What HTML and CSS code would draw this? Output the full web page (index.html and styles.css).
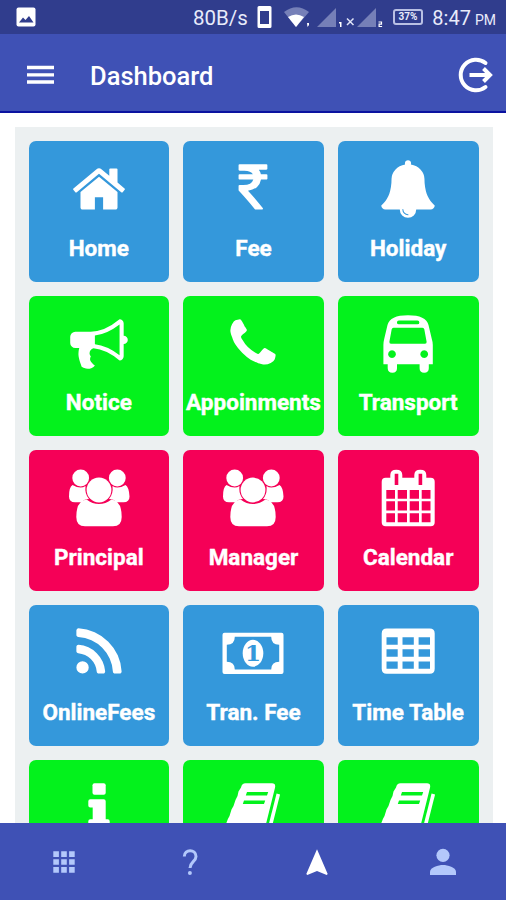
FILE: index.html
```html
<!DOCTYPE html>
<html lang="en">
<head>
  <meta charset="UTF-8" />
  <meta name="viewport" content="width=device-width, initial-scale=1" />
  <title>Dashboard</title>
  <link rel="stylesheet" href="styles.css">
</head>
<body>

  <!-- STATUS BAR -->
  <div class="status-bar">
    <svg class="status-photo" viewBox="0 0 20 20">
      <rect x="0.500" y="0.500" width="19" height="19" rx="2" fill="#fff" />
      <path d="M3 15.500l4-5 2.500 2.500 3.500-4 4.500 6.500z" fill="#303d8d" />
    </svg>
    <span class="speed">80B/s</span>
    <svg class="status-icons" width="136" height="34" viewBox="253 0 136 34">
      <path d="M259 6h11q1.500 0 1.500 1.500v19q0 1.500-1.500 1.500h-11q-1.500 0-1.500-1.500v-19q0-1.500 1.500-1.500zM260 11v13h9v-13z" fill="#fff" fill-rule="evenodd" />
      <path d="M284 12q12.500-9.500 25 0L296 27z" fill="#7680b8" />
      <path d="M288 17q8-5 16 0l-8 10z" fill="#fff" />
      <path d="M307 23h2v2l-1.500 2z" fill="#fff" />
      <path d="M317 27l19-19v19zM357 27l19-19v19z" fill="#7680b8" />
      <path d="M339 22h2.500v5h-1.500v-3.500h-1z" fill="#fff" />
      <path d="M347 18.500l6.500 6.500M353.500 18.500l-6.500 6.500" stroke="#dfe3f7" stroke-width="1.500" />
      <path d="M378.500 22h3v2.200h-2.400v2.300h3" fill="none" stroke="#fff" stroke-width="1.200" />
    </svg>
    <span class="battery">37%</span>
    <span class="clock">8:47<small>PM</small></span>
  </div>

  <!-- HEADER -->
  <header>
    <svg class="menu-icon" viewBox="0 0 27 20">
      <path d="M0 2.500h27M0 9.800h27M0 17h27" stroke="#fff" stroke-width="3.300" />
    </svg>
    <h1>Dashboard</h1>
    <svg class="logout-icon" viewBox="0 0 36 36">
      <path d="M28.500 6A15.300 15.300 0 1 0 28.500 30" fill="none" stroke="#fff" stroke-width="4" stroke-linecap="round" />
      <path d="M12.500 18h20M26.500 11.500l6.500 6.500-6.500 6.500" fill="none" stroke="#fff" stroke-width="4" />
    </svg>
  </header>

  <!-- MENU -->
  <main>
    <div class="grid">
      <div class="tile blue">
        <svg viewBox="-100 -100 1992 1992"><path d="M1472 992v480q0 26-19 45t-45 19h-384v-384h-256v384h-384q-26 0-45-19t-19-45v-480q0-1 .5-3t.5-3l575-474 575 474q1 2 1 6zm223-69l-62 74q-8 9-21 11h-3q-13 0-21-7l-692-577-692 577q-12 8-24 7-13-2-21-11l-62-74q-8-10-7-23.500t11-21.500l719-599q32-26 76-26t76 26l244 204v-195q0-14 9-23t23-9h192q14 0 23 9t9 23v408l219 182q10 8 11 21.500t-7 23.500z" /></svg>
        <span>Home</span>
      </div>
      <div class="tile blue">
        <svg viewBox="-547 -100 1992 1992"><path d="M898 470v102q0 14-9 23t-23 9h-168q-23 144-129 234t-276 110q167 178 459 536 14 16 4 34-8 18-29 18h-195q-16 0-25-12-306-367-498-571-9-9-9-22v-127q0-13 9.500-22.500t22.500-9.500h112q132 0 212.500-43t102.500-125h-427q-14 0-23-9t-9-23v-102q0-14 9-23t23-9h413q-57-113-268-113h-145q-13 0-22.500-9.500t-9.500-22.500v-133q0-14 9-23t23-9h832q14 0 23 9t9 23v102q0 14-9 23t-23 9h-233q47 61 64 144h171q14 0 23 9t9 23z" /></svg>
        <span>Fee</span>
      </div>
      <div class="tile blue">
        <svg viewBox="-100 -100 1992 1992"><path d="M912 1696q0-16-16-16-59 0-101.500-42.500t-42.500-101.500q0-16-16-16t-16 16q0 73 51.500 124.500t124.500 51.500q16 0 16-16zm816-288q0 52-38 90t-90 38h-448q0 106-75 181t-181 75-181-75-75-181h-448q-52 0-90-38t-38-90q50-42 91-88t85-119.500 74.500-158.500 50-206 19.500-260q0-152 117-282.500t307-158.500q-8-19-8-39 0-40 28-68t68-28 68 28 28 68q0 20-8 39 190 28 307 158.500t117 282.500q0 139 19.500 260t50 206 74.500 158.500 85 119.500 91 88z" /></svg>
        <span>Holiday</span>
      </div>

      <div class="tile green">
        <svg viewBox="-100 -100 1992 1992"><path d="M1664 640q53 0 90.500 37.500t37.500 90.500-37.500 90.500-90.500 37.500v384q0 52-38 90t-90 38q-417-347-812-380-58 19-91 66t-31 100.500 40 92.500q-20 33-23 65.500t6 58 33.500 55 48 50 61.500 50.500q-29 58-111.500 83t-168.500 11.500-132-55.500q-7-23-29.500-87.500t-32-94.500-23-89-15-101 3.500-98.500 22-110.500h-122q-66 0-113-47t-47-113v-192q0-66 47-113t113-47h480q435 0 896-384 52 0 90 38t38 90v384zm-128 604v-954q-394 302-768 343v270q377 42 768 341z" /></svg>
        <span>Notice</span>
      </div>
      <div class="tile green">
        <svg viewBox="-100 -100 1992 1992"><path d="M1600 1240q0 27-10 70.500t-21 68.500q-21 50-122 106-94 51-186 51-27 0-52.500-3.500t-57.500-12.500-47.500-14.500-55.500-20.500-49-18q-98-35-175-83-128-79-264.500-215.500t-215.500-264.500q-48-77-83-175-3-9-18-49t-20.500-55.500-14.500-47.500-12.500-57.500-3.500-52.500q0-92 51-186 56-101 106-122 25-11 68.500-21t70.500-10q14 0 21 3 18 6 53 76 11 19 30 54t35 63.500 31 53.500q3 4 17.500 25t21.500 35.500 7 28.500q0 20-28.500 50t-62 55-62 53-28.500 46q0 9 5 22.500t8.500 20.500 14 24 11.500 19q76 137 174 235t235 174q2 1 19 11.500t24 14 20.500 8.500 22.500 5q18 0 46-28.500t53-62 55-62 50-28.500q14 0 28.500 7t35.500 21.500 25 17.500q25 15 53.500 31t63.500 35 54 30q70 35 76 53 3 7 3 21z" /></svg>
        <span>Appoinments</span>
      </div>
      <div class="tile green">
        <svg viewBox="0 0 64 64"><path fill-rule="evenodd" d="M7.400 52.300V33q0-3 .800-6l3.300-14Q14 3.300 32 3.300T52.500 13l3.300 14q1 3 1 6v19.300h-4v4q0 4.400-4.600 4.400t-4.600-4.400v-4H21v4q0 4.400-4.600 4.400t-4.700-4.400v-4zM22.800 8.600a1.800 1.800 0 0 0 0 3.700h18.700a1.800 1.800 0 0 0 0-3.700zM17.500 15.700q-1.500 0-1.800 1.500l-2.300 12.500q-.300 2 1.600 2h34q1.900 0 1.600-2l-2.300-12.500q-.300-1.500-1.800-1.500zM16 38.200a3.900 3.900 0 1 0 .01 0zM48.200 38.200a3.900 3.900 0 1 0 .01 0z" /></svg>
        <span>Transport</span>
      </div>

      <div class="tile red">
        <svg viewBox="0 0 64 64">
          <circle cx="13.700" cy="12" r="8.400" />
          <circle cx="50.300" cy="12" r="8.400" />
          <path d="M5.500 19q8 4.500 13 1-1 8 3.500 13-4.500 0-7.500 3.300H8Q2 36.300 2 30.500 2 21 5.500 19zM58.500 19q-8 4.500-13 1 1 8-3.500 13 4.500 0 7.500 3.300h7q6 0 6-5.800Q62 21 58.500 19z" />
          <circle cx="32" cy="24" r="12.400" />
          <path d="M19.500 33.600q6 4.500 12.500 4.500t12.500-4.500q10.200 1 10.200 17.400 0 9.300-8.700 9.300H18q-8.700 0-8.700-9.300 0-16.400 10.200-17.400z" />
        </svg>
        <span>Principal</span>
      </div>
      <div class="tile red">
        <svg viewBox="0 0 64 64">
          <circle cx="13.700" cy="12" r="8.400" />
          <circle cx="50.300" cy="12" r="8.400" />
          <path d="M5.500 19q8 4.500 13 1-1 8 3.500 13-4.500 0-7.500 3.300H8Q2 36.300 2 30.500 2 21 5.500 19zM58.500 19q-8 4.500-13 1 1 8-3.500 13 4.500 0 7.500 3.300h7q6 0 6-5.800Q62 21 58.500 19z" />
          <circle cx="32" cy="24" r="12.400" />
          <path d="M19.500 33.600q6 4.500 12.500 4.500t12.500-4.500q10.200 1 10.200 17.400 0 9.300-8.700 9.300H18q-8.700 0-8.700-9.300 0-16.400 10.200-17.400z" />
        </svg>
        <span>Manager</span>
      </div>
      <div class="tile red">
        <svg viewBox="0 0 64 64"><path fill-rule="evenodd" d="M9.700 11.700h4.600V9q0-5.300 6-5.300t6 5.300v2.700h12V9q0-5.300 6-5.300t6 5.300v2.700h4.400q4 0 4 4v40.600q0 4-4 4h-45q-4 0-4-4V15.700q0-4 4-4zM18.700 7.700v11.300h3.600V7.700zM42.600 7.700v11.300h3.600V7.700zM10.300 24v8.700H19V24zM21.700 24v8.700H31V24zM33.700 24v8.700H43V24zM45.700 24v8.700h8.800V24zM10.300 35.200v9.300H19v-9.300zM21.700 35.200v9.300H31v-9.300zM33.700 35.200v9.300H43v-9.300zM45.700 35.200v9.300h8.800v-9.300zM10.300 47.200v9.100H19v-9.100zM21.700 47.200v9.100H31v-9.100zM33.700 47.200v9.100H43v-9.100zM45.700 47.200v9.100h8.800v-9.100z" /></svg>
        <span>Calendar</span>
      </div>

      <div class="tile blue">
        <svg viewBox="-100 -100 1992 1992"><path d="M576 1344q0 80-56 136t-136 56-136-56-56-136 56-136 136-56 136 56 56 136zm512 123q2 28-17 48-18 21-47 21h-135q-25 0-43-16.500t-20-41.500q-22-229-184.500-391.500t-391.500-184.500q-25-2-41.500-20t-16.500-43v-135q0-29 21-47 17-17 43-17h5q160 13 306 80.500t259 181.500q114 113 181.500 259t80.500 306zm512 2q2 27-18 47-18 20-46 20h-143q-26 0-44.500-17.500t-19.500-42.500q-12-215-101-408.500t-231.500-336-336-231.500-408.500-102q-25-1-42.500-19.500t-17.500-43.500v-143q0-28 20-46 18-18 44-18h3q262 13 501.500 120t425.500 294q187 186 294 425.500t120 501.500z" /></svg>
        <span>OnlineFees</span>
      </div>
      <div class="tile blue">
        <svg viewBox="0 0 64 64">
          <path fill-rule="evenodd" d="M3.500 11.700h57q2 0 2 2V51q0 2-2 2h-57q-2 0-2-2V13.700q0-2 2-2zM13.800 15.700q0 8-8 8v17.100q8 0 8 7.800h36.400q0-7.800 8-7.800V23.700q-8 0-8-8z" />
          <ellipse cx="32" cy="32.300" rx="10.300" ry="13.500" />
          <text class="bill" x="32" y="40" text-anchor="middle">1</text>
        </svg>
        <span>Tran. Fee</span>
      </div>
      <div class="tile blue">
        <svg viewBox="0 0 64 64"><path fill-rule="evenodd" d="M10.700 7.500h43q5 0 5 5v35.200q0 5-5 5h-43q-5 0-5-5V12.500q0-5 5-5zM10.500 16.300v7.400h11.200v-7.400zM26.500 16.300v7.400h11.300v-7.400zM42.600 16.300v7.400h11.400v-7.400zM10.500 28.300v7.400h11.200v-7.400zM26.500 28.300v7.400h11.300v-7.400zM42.600 28.300v7.400h11.400v-7.400zM10.500 40.400v7.400h11.200v-7.400zM26.500 40.400v7.400h11.300v-7.400zM42.600 40.400v7.400h11.400v-7.400z" /></svg>
        <span>Time Table</span>
      </div>

      <div class="tile green">
        <svg viewBox="0 0 64 64">
          <rect x="25.500" y="7.300" width="13.200" height="11.500" rx="2" />
          <path d="M23.300 23.300h13.400q2 0 2 2v18h2q2 0 2 2v5q0 2-2 2H23.300q-2 0-2-2v-5q0-2 2-2h2.400V31.600h-2.400q-2 0-2-2v-4.300q0-2 2-2z" />
        </svg>
      </div>
      <div class="tile green">
        <svg viewBox="0 0 64 64">
          <path fill-rule="evenodd" d="M24.500 7.300H51q4 0 3 4.500L44.500 50H4.500q1.500-6 4-10l2-6.500 2-3.500 2-6 2-4 1-4.500 2.500-4q1-4.200 4.500-4.200zM26 16l-1.200 3.600H46L47.200 16zM23 24.500l-1.200 3.600H43l1.200-3.600z" />
          <path d="M57.300 18L49.500 49" fill="none" stroke="#fff" stroke-width="3.600" />
        </svg>
      </div>
      <div class="tile green">
        <svg viewBox="0 0 64 64">
          <path fill-rule="evenodd" d="M24.500 7.300H51q4 0 3 4.500L44.500 50H4.500q1.500-6 4-10l2-6.500 2-3.500 2-6 2-4 1-4.500 2.500-4q1-4.200 4.500-4.200zM26 16l-1.200 3.600H46L47.200 16zM23 24.500l-1.200 3.600H43l1.200-3.600z" />
          <path d="M57.300 18L49.500 49" fill="none" stroke="#fff" stroke-width="3.600" />
        </svg>
      </div>
    </div>
  </main>

  <!-- BOTTOM NAV -->
  <nav>
    <button>
      <svg viewBox="0 0 32 32"><path d="M5.300 5.300h5.600v5.600H5.300zM13.200 5.300h5.600v5.600h-5.600zM21.100 5.300h5.600v5.600h-5.600zM5.300 13.200h5.600v5.600H5.300zM13.200 13.200h5.600v5.600h-5.600zM21.100 13.200h5.600v5.600h-5.600zM5.300 21.100h5.600v5.600H5.300zM13.200 21.100h5.600v5.600h-5.600zM21.100 21.100h5.600v5.600h-5.600z" /></svg>
    </button>
    <button>
      <svg viewBox="0 0 32 32">
        <path d="M10.300 10.500C10.300 2.800 22 3 22 10.500c0 5-6 5.500-6 11.500" fill="none" stroke="#b3c8fb" stroke-width="3" />
        <circle cx="15.900" cy="27" r="2" />
      </svg>
    </button>
    <button class="current">
      <svg viewBox="0 0 32 32"><path d="M16 3.300L5.300 28l1 1L16 25l9.700 4 1-1z" /></svg>
    </button>
    <button>
      <svg viewBox="0 0 32 32">
        <circle cx="16" cy="9.300" r="6.600" />
        <path d="M3 29v-3.200C3 21.300 11.500 19 16 19s13 2.300 13 6.800V29z" />
      </svg>
    </button>
  </nav>

</body>
</html>
```

FILE: styles.css
```css
* {
  box-sizing: border-box;
}

body {
  margin: 0;
  height: 900px;
  display: flex;
  flex-direction: column;
  overflow: hidden;
  font-family: Roboto, sans-serif;
  background-color: #fff;
}

svg {
  display: block;
  flex: none;
}

.status-bar {
  display: flex;
  align-items: center;
  flex: none;
  height: 34px;
  padding: 0 10px 0 16px;
  background-color: #303d8d;
  color: #e8ebfb;
  white-space: nowrap;
}

.status-photo {
  width: 20px;
  height: 20px;
}

.speed {
  width: 60px;
  margin-left: 157px;
  padding-top: 2px;
  font-size: 20.500px;
}

.battery {
  width: 31px;
  height: 16px;
  margin-left: 4px;
  border: 2px solid #b9c0e4;
  border-radius: 3px;
  font-size: 10px;
  font-weight: bold;
  line-height: 12px;
  text-align: center;
}

.clock {
  margin-left: 9px;
  padding-top: 2px;
  font-size: 20px;
}

.clock small {
  margin-left: 4px;
  font-size: 14px;
}

header {
  display: flex;
  align-items: center;
  flex: none;
  height: 79px;
  padding: 5px 13px 0 27px;
  background-color: #3f51b5;
  border-bottom: 2px solid #0a12a0;
  color: #fff;
}

header h1 {
  flex: 1;
  margin: 1px 0 0 36px;
  font-size: 25.500px;
  font-weight: 500;
}

.menu-icon {
  width: 27px;
  height: 20px;
}

.logout-icon {
  width: 36px;
  height: 36px;
}

main {
  flex: 1;
  min-height: 0;
  padding: 14px 13.500px 0 14.500px;
  overflow: hidden;
}

.grid {
  display: grid;
  grid-template-columns: repeat(3, 1fr);
  grid-auto-rows: 140.700px;
  gap: 14px;
  padding: 14px;
  background-color: #ecf0f1;
}

.tile {
  display: flex;
  flex-direction: column;
  align-items: center;
  padding-top: 16px;
  border-radius: 7px;
  color: #fff;
  font-size: 22.500px;
  font-weight: bold;
  line-height: 26px;
  white-space: nowrap;
}

.tile span {
  -webkit-text-stroke: 0.4px #fff;
}

.tile svg {
  width: 64px;
  height: 64px;
  margin-bottom: 13.500px;
  fill: #fff;
}

.tile .bill {
  fill: #3498db;
  font-family: "DejaVu Serif", serif;
  font-size: 23px;
  font-weight: bold;
}

.blue {
  background-color: #3498db;
}

.green {
  background-color: #03f21c;
}

.red {
  background-color: #f50057;
}

nav {
  display: flex;
  flex: none;
  height: 77px;
  padding-left: 1px;
  background-color: #3f51b5;
}

nav button {
  display: flex;
  flex: 1;
  align-items: center;
  justify-content: center;
  padding: 0;
  background: none;
  border: none;
}

nav svg {
  width: 32px;
  height: 32px;
  fill: #b3c8fb;
}

nav .current svg {
  fill: #fff;
}
```
